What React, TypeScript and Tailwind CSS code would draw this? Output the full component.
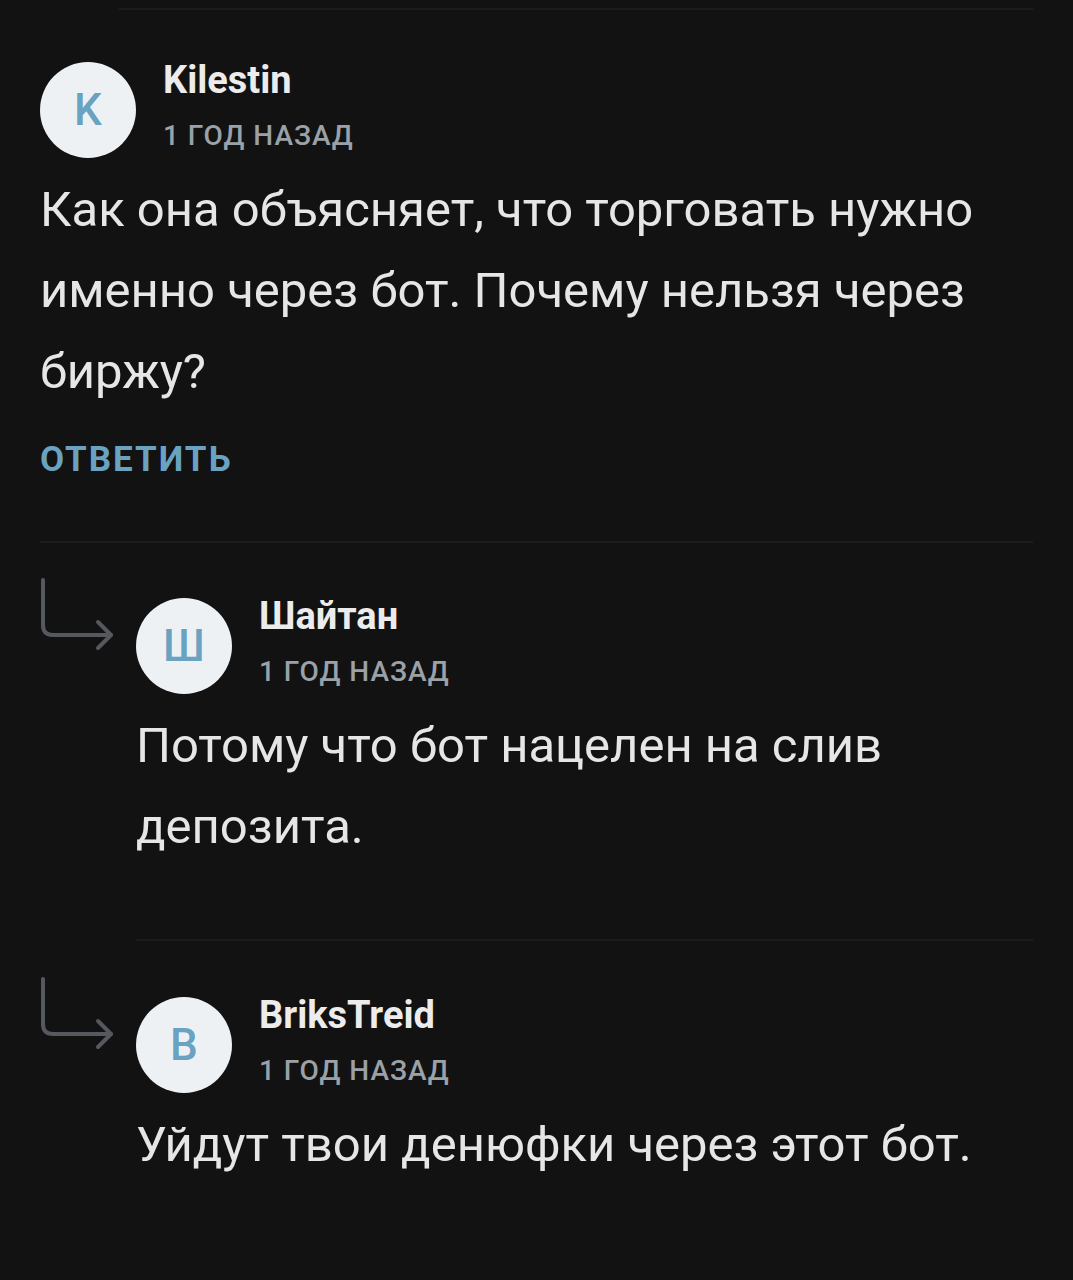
const ROBOTO = { fontFamily: "Roboto, 'Noto Sans', sans-serif" };

function Avatar({ letter }: { letter: string }) {
  return (
    <div className="w-[96px] h-[96px] rounded-full bg-[#eef1f4] flex items-center justify-center shrink-0">
      <span className="text-[44px] font-medium leading-none text-[#6aa2c1]">{letter}</span>
    </div>
  );
}

function Header({ letter, name }: { letter: string; name: string }) {
  return (
    <div className="flex items-center gap-[27px]">
      <Avatar letter={letter} />
      <div className="flex flex-col -mt-[4px]">
        <span className="text-[38px] font-bold leading-[36px] text-[#ececec]">{name}</span>
        <span className="mt-[20px] text-[28px] font-medium leading-[36px] tracking-[1px] text-[#9aa1a7]">
          1 ГОД НАЗАД
        </span>
      </div>
    </div>
  );
}

// arrow that points from the parent comment into a reply
function ReplyArrow() {
  return (
    <svg width="84" height="80" viewBox="0 0 84 80" fill="none" className="-ml-[4px] -mt-[4px]">
      <path d="M7 4 V49 Q7 59 17 59 H75" stroke="#55595e" strokeWidth="4" strokeLinecap="round" />
      <path d="M62 46 L75 59 L62 72" stroke="#55595e" strokeWidth="4" strokeLinecap="round" strokeLinejoin="round" />
    </svg>
  );
}

function Reply({ letter, name, text }: { letter: string; name: string; text: string }) {
  return (
    <div className="flex">
      <div className="w-[96px] shrink-0">
        <ReplyArrow />
      </div>
      <div className="flex-1 pt-[18px]">
        <Header letter={letter} name={name} />
        <p className="mt-[11px] text-[49px] leading-[81px] text-[#e6e6e6]">{text}</p>
      </div>
    </div>
  );
}

export default function App() {
  return (
    <div className="min-h-[1280px] w-full bg-[#121212] px-[40px]" style={ROBOTO}>
      <div className="pt-[8px] pl-[79px]">
        <div className="h-[2px] bg-[#1c1c1c]" />
      </div>

      {/* main comment */}
      <div className="mt-[52px]">
        <Header letter="K" name="Kilestin" />
        <p className="mt-[11px] text-[49px] leading-[81px] text-[#e6e6e6]">
          Как она объясняет, что торговать нужно именно через бот. Почему нельзя через биржу?
        </p>
        <div className="mt-[28px] text-[35px] font-bold leading-[40px] tracking-[2px] text-[#6aa2c1]">
          ОТВЕТИТЬ
        </div>
      </div>

      <div className="mt-[61px] h-[2px] bg-[#1c1c1c]" />

      <div className="mt-[37px]">
        <Reply letter="Ш" name="Шайтан" text="Потому что бот нацелен на слив депозита." />
      </div>

      <div className="mt-[72px] pl-[96px]">
        <div className="h-[2px] bg-[#1c1c1c]" />
      </div>

      <div className="mt-[38px]">
        <Reply letter="B" name="BriksTreid" text="Уйдут твои денюфки через этот бот." />
      </div>
    </div>
  );
}
